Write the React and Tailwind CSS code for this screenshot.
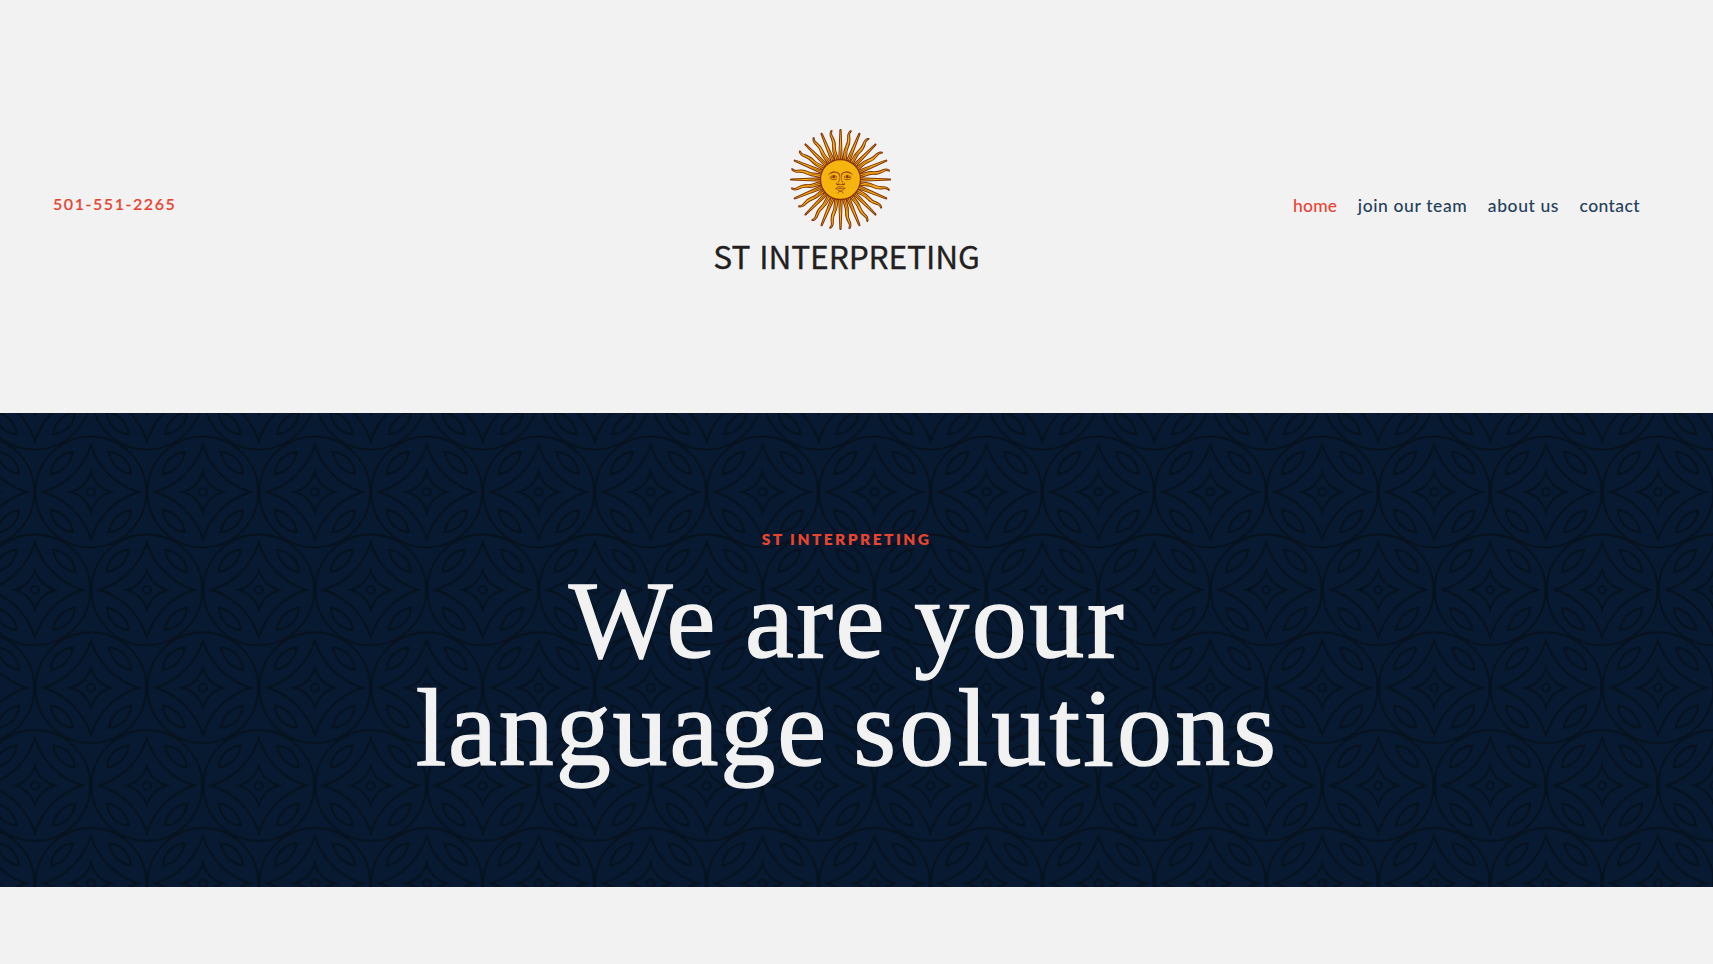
import React from "react";

const RAY_ANGLES = Array.from({ length: 16 }, (_, i) => i * 22.5);

function Sun() {
  return (
    <svg viewBox="330 180 140 140" className="block size-[101px]" aria-hidden="true">
      <defs>
        <g id="sun-ray">
          <path
            stroke="#85340a"
            strokeWidth="1.4"
            fill="#f6b40e"
            d="M396.84 251.31l28.454 61.992s.49 1.185 1.28.859c.79-.327.299-1.512.299-1.512l-23.715-63.956m-.68 24.12c-.347 9.428 5.452 14.613 4.694 23.032-.757 8.42 3.867 13.18 4.94 16.454 1.073 3.274-1.16 5.232-.198 5.698.963.466 3.07-2.12 2.383-6.775-.687-4.655-4.22-6.037-3.39-16.32.83-10.283-4.206-12.678-2.98-22.058"
          />
          <path
            fill="#85340a"
            d="M404.31 274.41c.453 9.054 5.587 13.063 4.579 21.314 2.213-6.525-3.124-11.583-2.82-21.22m-7.649-23.757l19.487 42.577-16.329-43.887"
          />
        </g>
        <path
          id="sun-brow"
          d="M382.73 244.02c4.915-4.273 11.11-4.915 14.53-1.709.837 1.121 1.373 2.32 1.593 3.57.43 2.433-.33 5.062-2.236 7.756.215-.001.643.212.856.427 1.697-3.244 2.297-6.577 1.74-9.746a13.815 13.815 0 0 0-.67-2.436c-4.7-3.845-11.11-4.272-15.81 2.138z"
        />
        <path
          id="sun-eye"
          d="M409.47 244.06c-1.897 0-3.713.822-4.781 2.531 2.137 1.923 6.856 2.132 10.062-.219a7.333 7.333 0 0 0-5.281-2.312zm-.031.438c1.846-.034 3.571.814 3.812 1.656-2.136 2.35-5.55 2.146-7.687.437.935-1.495 2.439-2.067 3.875-2.093z"
        />
      </defs>
      {RAY_ANGLES.map((a) => (
        <use key={a} href="#sun-ray" transform={`rotate(${a} 400 250)`} />
      ))}
      <circle cx="400" cy="250" r="27.778" fill="#f6b40e" stroke="#85340a" strokeWidth="1.9" />
      <g fill="#843511" stroke="#843511" strokeWidth="0.2">
        <use href="#sun-brow" />
        <use href="#sun-brow" transform="matrix(-1 0 0 1 800 0)" />
        <use href="#sun-eye" />
        <use href="#sun-eye" transform="matrix(-1 0 0 1 800 0)" />
        <circle cx="409.4" cy="246.1" r="1.9" />
        <circle cx="390.6" cy="246.1" r="1.9" />
        <path d="M404.2 248.6c3 2.2 7.600 2 11.200-.9-3.400 4-8.200 4-11.200.9zM395.800 248.600c-3 2.200-7.600 2-11.200-.9 3.400 4 8.200 4 11.200.9z" />
        <path d="M395.75 253.84c-.913.167-1.563.977-1.563 1.906 0 1.062.878 1.906 1.938 1.906a1.89 1.89 0 0 0 1.562-.812c.739.556 1.764.615 2.313.625.084.002.193 0 .25 0 .549-.01 1.573-.069 2.313-.625.36.516.935.812 1.562.812 1.06 0 1.938-.844 1.938-1.906 0-.929-.65-1.74-1.563-1.906.513.18.844.676.844 1.219a1.28 1.28 0 0 1-1.281 1.281c-.68 0-1.242-.54-1.282-1.219-.208.417-1.034 1.655-2.656 1.719-1.622-.064-2.447-1.302-2.656-1.719-.04.679-.6 1.219-1.281 1.219a1.28 1.28 0 0 1-1.282-1.281c0-.542.33-1.038.844-1.219z" />
        <path d="M397.84 259.53c-2.138 0-2.983 1.937-4.906 3.219 1.068-.427 1.91-1.27 3.406-2.125 1.496-.855 2.772.187 3.625.187h.032c.853 0 2.13-1.041 3.625-.187 1.497.856 2.369 1.698 3.437 2.125-1.924-1.282-2.8-3.219-4.938-3.219-.426 0-1.271.23-2.125.656h-.031c-.853-.426-1.698-.656-2.125-.656z" />
        <path d="M397.12 262.06c-.844.037-1.96.207-3.563.688 3.848-.855 4.697.437 6.407.437h.03c1.71 0 2.56-1.292 6.407-.437-4.274-1.282-5.124-.437-6.406-.437h-.031c-.802 0-1.437-.312-2.844-.25z" />
        <path d="M393.75 262.72c-.248.003-.519.005-.813.031 4.488.428 2.331 3 7.032 3h.03c4.702 0 2.575-2.572 7.063-3-4.7-.426-3.214 2.344-7.062 2.344h-.031c-3.608 0-2.496-2.421-6.22-2.375z" />
        <path d="M403.85 269.66a3.848 3.848 0 0 0-3.846-3.846 3.848 3.848 0 0 0-3.847 3.846 3.955 3.955 0 0 1 3.847-3.04 3.952 3.952 0 0 1 3.846 3.04z" />
      </g>
    </svg>
  );
}

const MOTIF_CENTERS = [
  [0, 0], [111.94, 0], [55.97, 97.85], [0, 195.7], [111.94, 195.7],
];

function HeroPattern() {
  return (
    <svg className="absolute inset-0 h-full w-full" aria-hidden="true">
      <defs>
        <g id="motif">
          <circle r="55.4" />
          <circle r="3.9" />
          <path d="M0-47.300A72 72 0 0 0 47.300 0A72 72 0 0 0 0 47.300A72 72 0 0 0-47.300 0A72 72 0 0 0 0-47.300Z" />
          <path d="M0-20A28 28 0 0 0 20 0A28 28 0 0 0 0 20A28 28 0 0 0-20 0A28 28 0 0 0 0-20Z" />
          <g id="leaf"><path d="M18-40A23 23 0 0 1 40-18A26 26 0 0 1 18-40Z" /></g>
          <use href="#leaf" transform="rotate(90)" />
          <use href="#leaf" transform="rotate(180)" />
          <use href="#leaf" transform="rotate(270)" />
        </g>
        <pattern id="tiles" x="90.9" y="79" width="111.94" height="195.7" patternUnits="userSpaceOnUse">
          <g fill="none" stroke="#061220" strokeWidth="2.4" strokeMiterlimit="10">
            {MOTIF_CENTERS.map(([x, y]) => (
              <use key={`${x},${y}`} href="#motif" x={x} y={y} />
            ))}
          </g>
        </pattern>
      </defs>
      <rect width="100%" height="100%" fill="url(#tiles)" />
    </svg>
  );
}

export default function App() {
  return (
    <div className="h-[964px] w-full overflow-hidden bg-[#f2f2f2]">
      <header className="grid h-[413px] grid-cols-3 pl-[53px] pr-[73px]">
        <a className="self-start pt-[194px] font-[Lato,sans-serif] text-[16px] leading-[20px] font-medium tracking-[1.55px] whitespace-nowrap text-[#e84130] [-webkit-text-stroke:0.2px_currentColor]">
          501-551-2265
        </a>
        <div className="flex flex-col items-center pt-[129px]">
          <div className="-ml-[12px]"><Sun /></div>
          <span className="mt-[7px] font-['Noto_Sans_CJK_SC',sans-serif] text-[31.7px] leading-[36px] tracking-[-0.12px] whitespace-nowrap text-[#231f20] [-webkit-text-stroke:0.3px_#231f20] [word-spacing:2px]">
            ST INTERPRETING
          </span>
        </div>
        <nav className="flex items-start justify-end gap-[20.5px] pt-[194px] font-[Lato,sans-serif] text-[17.5px] leading-[24px] font-medium tracking-[0.6px] whitespace-nowrap text-[#24405a]">
          <a className="tracking-[0.2px] text-[#ea4335]">home</a>
          <a>join our team</a>
          <a>about us</a>
          <a className="tracking-[0.4px]">contact</a>
        </nav>
      </header>
      <section className="relative h-[474px] overflow-hidden bg-[#081a32]">
        <HeroPattern />
        <div className="relative flex w-[1691px] flex-col items-center pt-[116px] text-center">
          <p className="pl-[2px] font-[Lato,sans-serif] text-[15.5px] leading-[20px] font-extrabold tracking-[2.45px] text-[#e8442f]">
            ST INTERPRETING
          </p>
          <h1 className="mt-[17px] pl-[4px] font-['Liberation_Serif',serif] text-[110px] leading-[108px] text-[#f2f2f2] [-webkit-text-stroke:1.400px_#f2f2f2]">
            <span className="tracking-[2.6px] [word-spacing:-3px]">We are your</span>
            <br />
            <span className="tracking-[1.9px] [word-spacing:-4px]">language </span>
            <span className="tracking-[3.2px]">solutions</span>
          </h1>
        </div>
      </section>
    </div>
  );
}
